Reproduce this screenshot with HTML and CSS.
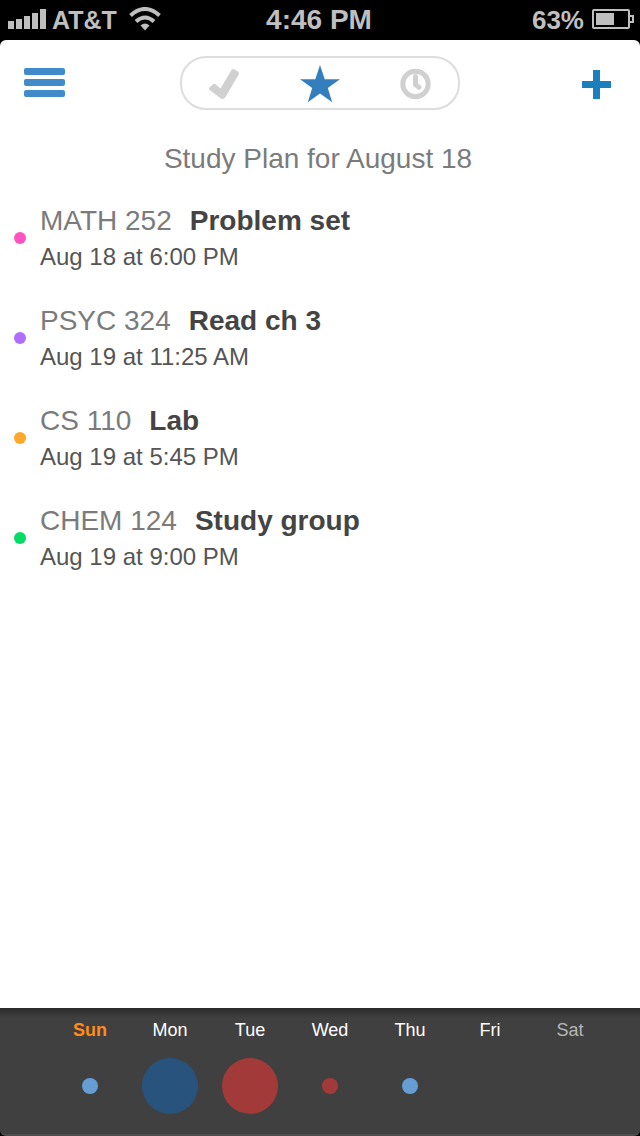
FILE: index.html
```html
<!DOCTYPE html>
<html lang="en">
<head>
<meta charset="utf-8">
<meta name="viewport" content="width=device-width, initial-scale=1">
<title>Study Plan</title>
<link rel="stylesheet" href="styles.css">
</head>
<body>
<div class="status">
  <div class="status-left">
    <svg class="signal" width="38" height="20" viewBox="0 0 38 20" aria-hidden="true"><path d="M0 12h6v8H0zM8 10h6v10H8zM16 7h6v13h-6zM24 4h6v16h-6zM32 0h6v20h-6z"/></svg>
    <span class="carrier">AT&amp;T</span>
    <svg class="wifi" width="32" height="24" viewBox="0 0 32 24" aria-hidden="true"><path class="arc" d="M1.500 8.500Q16-4.500 30.500 8.500M7 14.500Q16 6.500 25 14.500"/><path d="M11.500 18.500Q16 14.500 20.500 18.500L16 23.500z"/></svg>
  </div>
  <span class="clock">4:46 PM</span>
  <div class="status-right">
    <span class="percent">63%</span>
    <svg class="battery" width="42" height="20" viewBox="0 0 42 20" aria-hidden="true"><rect class="case" x="1" y="1" width="36" height="18" rx="1"/><path class="case" d="M38 7h3v6h-3"/><path d="M4 4h18v12H4z"/></svg>
  </div>
</div>
<main class="page">
  <header class="toolbar">
    <button class="icon-button menu" aria-label="Menu"><svg width="41" height="29" viewBox="0 0 41 29" aria-hidden="true"><rect width="41" height="7" rx="2"/><rect y="11" width="41" height="7" rx="2"/><rect y="22" width="41" height="7" rx="2"/></svg></button>
    <nav class="tabs" aria-label="Views">
      <button class="tab" aria-label="Completed"><svg width="32" height="32" viewBox="0 0 32 32" aria-hidden="true"><path d="M1.500 19.500 5.500 16Q6.500 15.200 7.500 16.200L12.500 20.500 23.500 2Q24.500.5 26 1.300L30.200 3.800Q31.600 4.700 30.800 6.200L17.500 29Q15.500 32 12.500 30.300L1.600 22Q.3 20.700 1.500 19.500z"/></svg></button>
      <button class="tab active" aria-label="Starred" aria-current="page"><svg width="40" height="38" viewBox="0 0 40 38" aria-hidden="true"><path d="M20 0 24.700 14.300H40L27.800 23 32.200 37.300 20 28.500 7.800 37.300 12.200 23 0 14.300H15.300z"/></svg></button>
      <button class="tab" aria-label="Upcoming"><svg width="32" height="32" viewBox="0 0 32 32" aria-hidden="true"><circle class="ring" cx="15.500" cy="16" r="12.700"/><path class="hand" d="M15.500 8.500V16.500L19 19.200"/></svg></button>
    </nav>
    <button class="icon-button add" aria-label="Add"><svg width="29" height="29" viewBox="0 0 29 29" aria-hidden="true"><path d="M11 0h7v11h11v7H18v11h-7V18H0v-7h11z"/></svg></button>
  </header>
  <h1 class="title">Study Plan for August 18</h1>
  <ul class="tasks">
    <li class="task"><i class="dot pink"></i><div class="details"><div class="name"><span class="course">MATH 252</span><strong>Problem set</strong></div><div class="due">Aug 18 at 6:00 PM</div></div></li>
    <li class="task"><i class="dot purple"></i><div class="details"><div class="name"><span class="course">PSYC 324</span><strong>Read ch 3</strong></div><div class="due">Aug 19 at 11:25 AM</div></div></li>
    <li class="task"><i class="dot orange"></i><div class="details"><div class="name"><span class="course">CS 110</span><strong>Lab</strong></div><div class="due">Aug 19 at 5:45 PM</div></div></li>
    <li class="task"><i class="dot green"></i><div class="details"><div class="name"><span class="course">CHEM 124</span><strong>Study group</strong></div><div class="due">Aug 19 at 9:00 PM</div></div></li>
  </ul>
</main>
<footer class="week">
  <div class="day today"><span>Sun</span><div class="load"><i class="ball small sky"></i></div></div>
  <div class="day"><span>Mon</span><div class="load"><i class="ball large navy"></i></div></div>
  <div class="day"><span>Tue</span><div class="load"><i class="ball large red"></i></div></div>
  <div class="day"><span>Wed</span><div class="load"><i class="ball small red"></i></div></div>
  <div class="day"><span>Thu</span><div class="load"><i class="ball small sky"></i></div></div>
  <div class="day"><span>Fri</span><div class="load"></div></div>
  <div class="day weekend"><span>Sat</span><div class="load"></div></div>
</footer>
</body>
</html>
```
FILE: styles.css
```css
* { box-sizing: border-box; }
body {
  margin: 0;
  min-height: 100vh;
  display: flex;
  flex-direction: column;
  background: #000;
  font-family: "Liberation Sans", Arial, sans-serif;
}
svg { display: block; }
button { border: 0; padding: 0; background: none; cursor: pointer; }

.status {
  display: grid;
  grid-template-columns: 1fr auto 1fr;
  align-items: center;
  height: 40px;
  padding: 0 6px 2px 8px;
  color: #bfbfbf;
  fill: #bfbfbf;
  font-size: 26px;
  font-weight: bold;
  line-height: 32px;
}
.status-left, .status-right { display: flex; align-items: center; }
.status-left { gap: 6px; }
.status-right { justify-content: flex-end; gap: 8px; }
.carrier { padding-top: 2px; font-size: 25px; }
.percent { padding-top: 2px; }
.wifi { margin-left: 6px; }
.arc { fill: none; stroke: #bfbfbf; stroke-width: 4; }
.case { fill: none; stroke: #bfbfbf; stroke-width: 2; }
.clock { padding: 2px 4px 0 0; font-size: 28px; }

.page {
  flex: 1;
  background: #fff;
  border-radius: 6px 6px 0 0;
}
.toolbar {
  display: grid;
  grid-template-columns: 1fr auto 1fr;
  align-items: center;
  padding: 16px 24px 0;
}
.menu { justify-self: start; padding-bottom: 2px; fill: #428bca; }
.add { justify-self: end; margin-right: 5px; padding-top: 2px; fill: #1b7ebd; }
.tabs {
  display: grid;
  grid-template-columns: repeat(3, 96px);
  justify-content: center;
  width: 280px;
  height: 54px;
  border: 2px solid #ddd;
  border-radius: 26px;
}
.tab { display: grid; place-items: center; padding-top: 2px; fill: #d0d0d0; }
.tab.active { fill: #357ebd; }
.ring { fill: none; stroke: #d0d0d0; stroke-width: 5; }
.hand { fill: none; stroke: #d0d0d0; stroke-width: 5; stroke-linecap: round; }

.title {
  margin: 33px 0 0;
  padding-right: 4px;
  color: #7b7b7b;
  font-size: 28px;
  font-weight: normal;
  line-height: 32px;
  text-align: center;
}
.tasks {
  display: grid;
  gap: 26px;
  margin: 26px 0 0;
  padding: 0 14px;
  list-style: none;
}
.task { display: flex; align-items: center; gap: 14px; }
.details { padding-top: 2px; }
.dot { width: 12px; height: 12px; border-radius: 50%; }
.pink { background: #ff54c0; }
.purple { background: #b06dff; }
.orange { background: #ffa72b; }
.green { background: #00dc64; }
.name {
  display: flex;
  gap: 18px;
  color: #444;
  font-size: 28px;
  line-height: 36px;
}
.course { color: #7b7b7b; }
.due { color: #555; font-size: 24px; line-height: 36px; }

.week {
  display: grid;
  grid-template-columns: repeat(7, 1fr);
  height: 128px;
  padding: 10px 30px 0 50px;
  border-bottom: 2px solid #4d4d4d;
  border-radius: 0 0 6px 6px;
  background: linear-gradient(#2a2a2a, #404040 10px);
  color: #fff;
  font-size: 18px;
  line-height: 24px;
  text-align: center;
}
.today { color: #ff8c1a; font-weight: bold; }
.weekend { color: #b5b5b5; }
.load { display: grid; place-items: center; height: 56px; margin-top: 16px; }
.ball { border-radius: 50%; }
.small { width: 16px; height: 16px; }
.large { width: 56px; height: 56px; }
.sky { background: #669dd3; }
.navy { background: #27537d; }
.red { background: #a23a3a; }
```
